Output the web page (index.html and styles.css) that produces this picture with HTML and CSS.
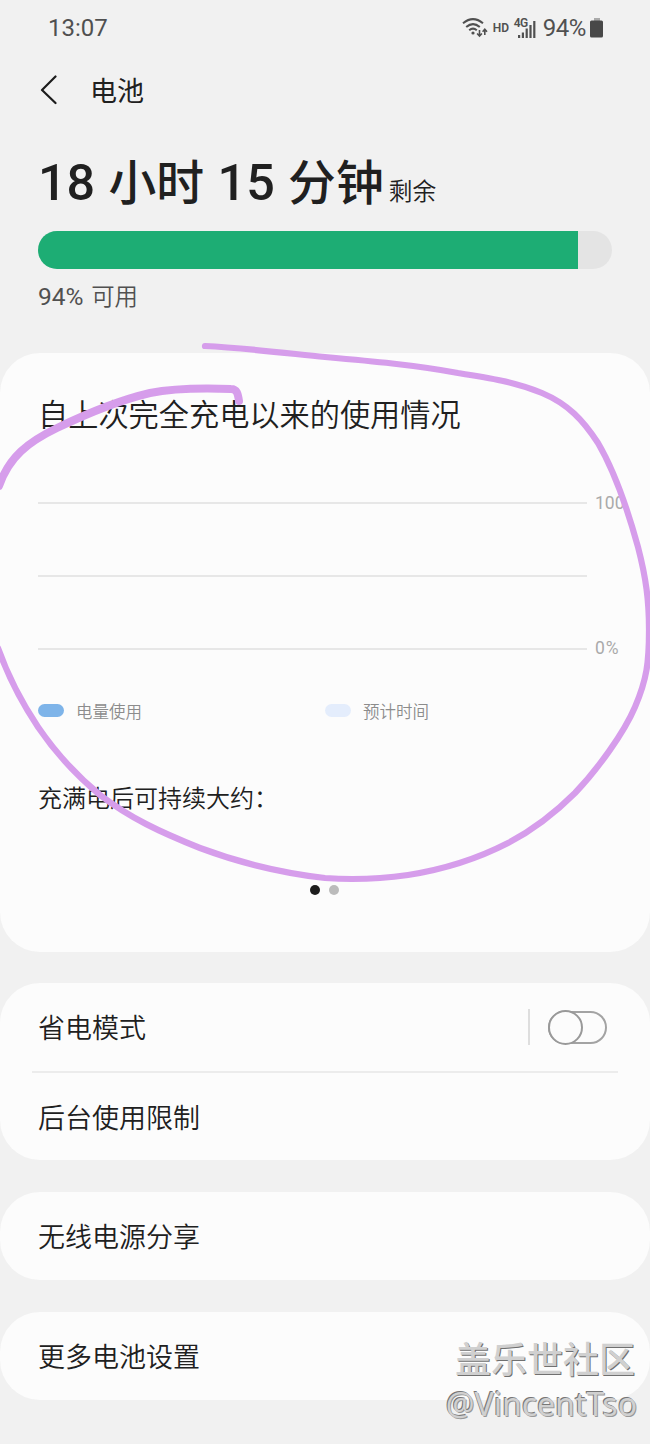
FILE: index.html
```html
<!DOCTYPE html>
<html lang="zh-CN">
<head>
<meta charset="utf-8">
<title>电池</title>
<link rel="stylesheet" href="styles.css">
</head>
<body>
<div class="screen">
  <header class="status">
    <span class="time">13:07</span>
    <div class="indicators">
      <svg class="wifi" width="26" height="20" viewBox="0 0 26 20" fill="none" stroke="#505050" stroke-width="2">
        <path d="M1 5.2Q11-3 21 5.2M4.2 9Q11 3.2 17.8 9M7.2 12.3Q11 9 14.8 12.3"/>
        <circle cx="11" cy="15" r="1.6" fill="#505050" stroke="none"/>
        <path d="M17.5 12v6m-2.4-2.5 2.4 2.5 2.4-2.5M22.8 17v-5.6m-2.2 2.3 2.2-2.4 2.2 2.4" stroke-width="1.6"/>
      </svg>
      <span class="hd">HD</span>
      <div class="cell"><span class="net">4G</span>
        <svg width="20" height="18" viewBox="0 0 20 18" fill="#505050"><path d="M0 15h2.2v3H0zM3.8 12.5H6V18H3.8zM7.6 8.5h2.2V18H7.6zM11.4 5h2.2v13h-2.2zM15.2 1h2.2v17h-2.2z"/></svg>
      </div>
      <span class="pct">94%</span>
      <svg class="batt" width="14" height="20" viewBox="0 0 14 20"><path d="M4 0h6v3H4z" fill="#aaa"/><rect y="2.5" width="13" height="17" rx="1.5" fill="#484848"/></svg>
    </div>
  </header>
  <nav class="titlebar">
    <svg width="18" height="30" viewBox="0 0 18 30" fill="none" stroke="#1c1c1c" stroke-width="2.2" stroke-linecap="round" stroke-linejoin="round"><path d="M15.5 1.5 2 15l13.5 13"/></svg>
    <span>电池</span>
  </nav>
  <section class="summary">
    <div class="remaining"><span class="duration"><b>18</b> 小时 <b>15</b> 分钟</span><span class="left">剩余</span></div>
    <div class="bar"><div class="fill" style="width:94%"></div></div>
    <div class="available"><span class="num">94%</span> 可用</div>
  </section>
  <section class="card usage">
    <h2>自上次完全充电以来的使用情况</h2>
    <div class="chart">
      <div class="grid"><i></i><i></i><i></i></div>
      <div class="axis"><span>100</span><span>0%</span></div>
    </div>
    <div class="legend">
      <div><i class="used"></i>电量使用</div>
      <div><i class="estimate"></i>预计时间</div>
    </div>
    <p class="full">充满电后可持续大约：</p>
    <div class="dots"><i class="on"></i><i></i></div>
  </section>
  <section class="card power">
    <div class="row"><span>省电模式</span><div class="control"><div class="toggle"></div></div></div>
    <div class="rule"></div>
    <div class="row"><span>后台使用限制</span></div>
  </section>
  <section class="card"><div class="row"><span>无线电源分享</span></div></section>
  <section class="card"><div class="row"><span>更多电池设置</span></div></section>
  <svg class="ink" width="650" height="1444" viewBox="0 0 650 1444" fill="none" stroke="#d69deb" stroke-linecap="round" stroke-linejoin="round">
    <path stroke-width="6.2" d="M205 346C244 348 285 353 325 357C370 361 415 365 458 373C490 378 515 382 542 393C568 404 583 420 598 443C615 472 630 518 638 547C646 578 649 600 649 630C649 662 647 679 635 707C624 733 597 770 575 793C556 812 535 829 508 843C475 860 440 870 408 875C380 879 352 880 325 878C282 873 240 863 200 848C160 832 130 818 100 795C76 775 55 752 38 727C22 703 9 679 -2 648"/>
    <path stroke-width="8" d="M239 401C238 394 237 389 231 389C203 388 175 388 150 393C116 401 86 414 57 428C28 442 9 457 -1 486"/>
  </svg>
  <div class="watermark"><div class="community">盖乐世社区</div><div class="author">@VincentTso</div></div>
</div>
</body>
</html>
```
FILE: styles.css
```css
* { box-sizing: border-box; }
body { margin: 0; background: #f1f1f1; color: #202020; font-family: Roboto, "Noto Sans CJK SC", sans-serif; }
.screen { position: relative; width: 650px; height: 1444px; overflow: hidden; }
.status { height: 56px; padding: 0 46px 0 48px; display: flex; justify-content: space-between; align-items: center; color: #505050; }
.time { font-size: 24px; line-height: 56px; }
.indicators { display: flex; align-items: center; }
.wifi { margin-right: 5px; }
.hd { font-size: 12px; font-weight: 600; width: 21px; }
.cell { width: 24px; height: 20px; display: grid; justify-items: end; align-items: end; margin-right: 5px; }
.cell > * { grid-area: 1 / 1; }
.net { justify-self: start; align-self: start; font-size: 12px; line-height: 11px; font-weight: 600; letter-spacing: -.5px; }
.pct { font-size: 24px; letter-spacing: -.4px; margin-right: 4px; }
.titlebar { height: 67px; padding: 0 40px; display: flex; align-items: center; gap: 32px; font-family: "Noto Sans CJK SC", sans-serif; font-size: 27px; font-weight: 400; }
.summary { height: 230px; padding: 25px 38px 0; }
.remaining { height: 70px; line-height: 70px; display: flex; align-items: baseline; white-space: nowrap; }
.duration { font-size: 47.8px; font-weight: 500; word-spacing: 1.5px; }
.duration b { font-size: 50.3px; font-weight: 500; }
.left { margin-left: 5px; font-size: 23.7px; font-weight: 350; }
.bar { height: 38px; margin-top: 13px; border-radius: 19px; background: #e4e4e4; overflow: hidden; }
.fill { height: 100%; background: #1dad74; }
.available { margin-top: 10px; line-height: 36px; font-size: 23.4px; color: #505050; font-weight: 350; word-spacing: 2px; }
.num { font-size: 24.5px; font-weight: 400; }
.card { background: #fcfcfc; border-radius: 40px; margin-bottom: 32px; font-family: "Noto Sans CJK SC", sans-serif; }
.usage { height: 599px; padding: 37px 38px 0; margin-bottom: 31px; }
h2 { margin: 0; font-size: 30.2px; line-height: 46px; font-weight: 350; white-space: nowrap; }
.chart { margin-top: 57px; height: 164px; display: flex; }
.grid { flex: 0 0 549px; padding: 9px 0 7px; display: flex; flex-direction: column; justify-content: space-between; }
.grid i { height: 2px; background: #e7e7e7; }
.axis { flex: none; margin: 0 0 -1px 8px; display: flex; flex-direction: column; justify-content: space-between; font: 17.5px/20px Roboto, sans-serif; color: #aaa; }
.axis span:last-child { letter-spacing: 1px; }
.legend { margin-top: 40px; display: grid; grid-template-columns: 287px 1fr; color: #8c8c8c; font-size: 16.5px; line-height: 28px; font-weight: 350; }
.legend div { display: flex; align-items: center; gap: 12px; }
.legend i { width: 26px; height: 13px; border-radius: 7px; margin-top: -2px; }
.used { background: #7eb4e9; }
.estimate { background: #e4edfc; }
.full { margin: 54px 0 0; font-size: 24px; line-height: 36px; font-weight: 350; }
.dots { margin-top: 70px; padding-right: 1px; display: flex; justify-content: center; gap: 9px; }
.dots i { width: 10px; height: 10px; border-radius: 50%; background: #bbb; }
.dots .on { background: #1c1c1c; }
.row { height: 88px; padding: 0 43px 0 38px; display: flex; align-items: center; justify-content: space-between; font-size: 27px; line-height: 40px; font-weight: 350; }
.power { height: 177px; }
.power .row:last-child { height: 87px; }
.rule { height: 2px; margin: 0 32px; background: #ececec; }
.control { padding-left: 18px; height: 36px; border-left: 2px solid #dedede; display: flex; align-items: center; }
.toggle { position: relative; width: 59px; height: 33px; border: 2px solid #a3a3a3; border-radius: 17px; }
.toggle::before { content: ""; box-sizing: border-box; position: absolute; left: -2px; top: -3px; width: 35px; height: 35px; border: 2px solid #999; border-radius: 50%; background: #fcfcfc; }
.ink { position: absolute; left: 0; top: 0; }
.watermark { position: absolute; right: 13px; bottom: 17px; text-align: right; color: #d0d0d0; }
.community { font: 500 36px/48px "Noto Sans CJK SC", sans-serif; margin-right: 2px; text-shadow: 1px 1px 0 #707070; }
.author { font: 32px/46px "Noto Sans", sans-serif; text-shadow: -1px -1px 0 #777, 1px 1px 0 #999; }
```
